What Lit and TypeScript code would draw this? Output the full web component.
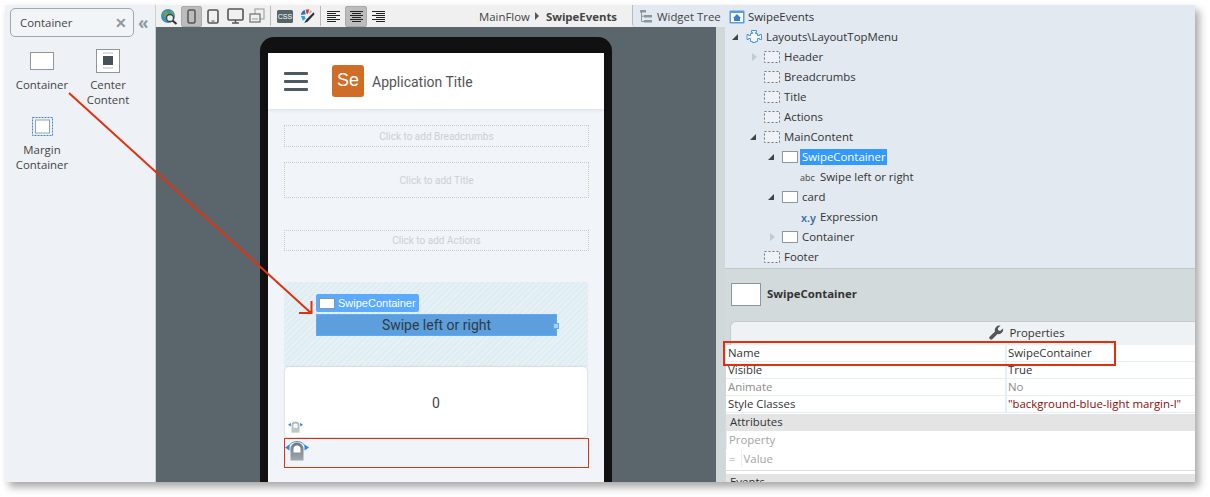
import { LitElement, css, html, svg } from 'lit';
import { customElement } from 'lit/decorators.js';

type TreeRow = { label: string; level: number; arrow?: 'open' | 'closed'; icon: string; selected?: boolean };

const treeRows: TreeRow[] = [
  { label: 'SwipeEvents', level: 0, icon: 'screen' },
  { label: 'Layouts\\LayoutTopMenu', level: 1, arrow: 'open', icon: 'block' },
  { label: 'Header', level: 2, arrow: 'closed', icon: 'dash' },
  { label: 'Breadcrumbs', level: 2, icon: 'dash' },
  { label: 'Title', level: 2, icon: 'dash' },
  { label: 'Actions', level: 2, icon: 'dash' },
  { label: 'MainContent', level: 2, arrow: 'open', icon: 'dash' },
  { label: 'SwipeContainer', level: 3, arrow: 'open', icon: 'box', selected: true },
  { label: 'Swipe left or right', level: 4, icon: 'abc' },
  { label: 'card', level: 3, arrow: 'open', icon: 'box' },
  { label: 'Expression', level: 4, icon: 'xy' },
  { label: 'Container', level: 3, arrow: 'closed', icon: 'box' },
  { label: 'Footer', level: 2, icon: 'dash' },
];

const indent = [4, 7, 25, 43, 61];

const props = [
  { name: 'Name', value: 'SwipeContainer', kind: '' },
  { name: 'Visible', value: 'True', kind: '' },
  { name: 'Animate', value: 'No', kind: 'muted' },
  { name: 'Style Classes', value: '"background-blue-light margin-l"', kind: 'code' },
];

const gestureIcon = (w: number, h: number, faded: boolean) => html`
  <svg width=${w} height=${h} viewBox="0 0 24 21">
    <defs>
      <linearGradient id=${faded ? 'fingerA' : 'fingerB'} x1="0" y1="0" x2="0" y2="1">
        <stop offset="0" stop-color=${faded ? '#aeb9bd' : '#6d787d'} />
        <stop offset="1" stop-color=${faded ? '#c2cccf' : '#a0a9ad'} />
      </linearGradient>
    </defs>
    ${faded ? '' : svg`<path d="M3 8 A9.500 9.500 0 0 1 21 8" fill="none" stroke="#4a9be8" stroke-width="1"/>`}
    <path d="M0 7.500 L4.500 4.500 V10.500Z M24 7.500 L19.500 4.500 V10.500Z" fill="#2f86e0"/>
    <path d="M5.500 20.500 V9 A6.500 6.500 0 0 1 18.500 9 V20.500Z" fill=${faded ? 'url(#fingerA)' : 'url(#fingerB)'}/>
    <path d="M8.500 12.500 V9 A3.500 3.500 0 0 1 15.500 9 V12.500Z" fill="#fff"/>
  </svg>`;

@customElement('app-root')
export class AppRoot extends LitElement {
  static styles = css`
    :host {
      display: block;
      position: relative;
      width: 1210px;
      height: 497px;
      padding: 5px 15px 15px 5px;
      box-sizing: border-box;
      background: #fff;
      font-family: "Open Sans", "Noto Sans", sans-serif;
      font-size: 11.4px;
      color: #333;
      overflow: hidden;
    }
    .window {
      display: flex;
      height: 477px;
      box-shadow: 4px 5px 8px rgba(0, 0, 0, 0.35);
      overflow: hidden;
    }

    /* toolbox */
    .toolbox {
      width: 150px;
      flex: none;
      background: #eef2f6;
      border-right: 1px solid #c9d0d3;
      box-sizing: content-box;
    }
    .search-row {
      display: flex;
      align-items: center;
      padding: 3px 0 0 5px;
    }
    .search {
      width: 124px;
      height: 29px;
      box-sizing: border-box;
      border: 1px solid #9fa9ad;
      border-radius: 5px;
      display: flex;
      align-items: center;
      justify-content: space-between;
      padding: 0 6px 0 9px;
      color: #444;
      background: #f2f5f8;
    }
    .search b { color: #8d979c; font-size: 14px; font-weight: 700; line-height: 1; }
    .collapse { margin-left: 4px; color: #8d9ba1; font-size: 17px; line-height: 1; font-weight: 700; }
    .items {
      display: grid;
      grid-template-columns: 66px 66px;
      padding: 10px 0 0 4px;
      row-gap: 5px;
    }
    .item {
      display: flex;
      flex-direction: column;
      align-items: center;
      text-align: center;
      line-height: 15px;
      color: #444;
    }
    .item .ic { height: 28px; display: flex; align-items: center; justify-content: center; margin-bottom: 2px; }

    /* designer */
    .designer {
      width: 569px;
      flex: none;
      display: flex;
      flex-direction: column;
    }
    .toolbar {
      height: 22px;
      flex: none;
      background: #f0f0f0;
      display: flex;
      align-items: center;
      position: relative;
    }
    .tools { display: flex; align-items: center; padding-left: 4px; height: 22px; }
    .tool { display: flex; align-items: center; justify-content: center; height: 21px; }
    .tool.on { background: #bcbcbc; border: 1px solid #aaa; border-radius: 2px; box-sizing: border-box; }
    .sep { width: 1px; height: 20px; background: #b5bcbf; }
    .crumb {
      margin-left: 94px;
      display: flex;
      align-items: center;
      gap: 5px;
      color: #444;
      white-space: nowrap;
    }
    .crumb i { width: 0; height: 0; border: 4px solid transparent; border-left: 4px solid #555; border-right: 0; }
    .crumb b { font-weight: 700; margin-left: 2px; }
    .tree-tab {
      position: absolute;
      right: 0;
      top: 0;
      width: 93px;
      height: 22px;
      box-sizing: border-box;
      background: #e2e9f0;
      border-left: 1px solid #b4bdc2;
      border-bottom-left-radius: 4px;
      display: flex;
      align-items: center;
      gap: 4px;
      padding-left: 6px;
      color: #444;
    }
    .stage { flex: 1; display: flex; min-height: 0; }
    .canvas {
      flex: 1;
      background: #5a666b;
      padding: 10px 0 0 104px;
      overflow: hidden;
    }
    .strip { width: 9px; flex: none; background: #d0d8da; }
    .phone {
      width: 352px;
      height: 600px;
      box-sizing: border-box;
      background: #111;
      border-radius: 14px 14px 0 0;
      padding: 16px 8px 0;
    }
    .screen {
      height: 100%;
      background: #f1f4f8;
      font-family: Roboto, "Liberation Sans", sans-serif;
      padding-top: 72px;
      position: relative;
    }
    .app-head {
      position: absolute;
      inset: 0 0 auto 0;
      height: 56px;
      background: #fff;
      box-shadow: 0 1px 4px rgba(0, 0, 0, 0.1);
      display: flex;
      align-items: center;
    }
    .burger { margin-left: 16px; width: 24px; display: flex; flex-direction: column; gap: 5px; }
    .burger span { height: 3px; background: #4e5a62; border-radius: 1px; }
    .logo {
      margin-left: 24px;
      width: 32px;
      height: 32px;
      border-radius: 3px;
      background: #cf6d26;
      color: #fff;
      font-family: "Liberation Sans", sans-serif;
      font-size: 18px;
      display: flex;
      align-items: center;
      justify-content: center;
      padding-bottom: 2px;
      box-sizing: border-box;
    }
    .app-title { margin-left: 8px; padding-top: 2px; font-size: 14px; color: #555; }
    .ph {
      margin: 0 15px 0 16px;
      border: 1px dotted #c6cbcf;
      color: #ccd0d4;
      font-size: 10px;
      display: flex;
      align-items: center;
      justify-content: center;
      box-sizing: border-box;
    }
    .ph.crumbs { height: 22px; margin-bottom: 15px; }
    .ph.title { height: 36px; margin-bottom: 32px; }
    .ph.actions { height: 21px; margin-bottom: 31px; }
    .swipe {
      margin: 0 16px;
      height: 85px;
      box-sizing: border-box;
      padding: 12px 0 0 32px;
      background: repeating-linear-gradient(135deg, #dfedf3 0 2px, #e6f1f6 2px 4px);
    }
    .tag {
      width: 103px;
      height: 18px;
      box-sizing: border-box;
      background: #5aabff;
      border-radius: 2px;
      display: flex;
      align-items: center;
      gap: 3px;
      padding-left: 3px;
      color: #fff;
      font-family: "Liberation Sans", sans-serif;
      font-size: 11px;
      white-space: nowrap;
    }
    .tag span { width: 16px; height: 11px; box-sizing: border-box; background: #fff; border: 1px solid #8c979c; display: block; }
    .swipe-text {
      margin-top: 2px;
      width: 241px;
      height: 22px;
      box-sizing: border-box;
      background: #5c9fdc;
      border: 1px solid #5aabff;
      color: #2f3b47;
      font-size: 14px;
      display: flex;
      align-items: center;
      justify-content: center;
      position: relative;
    }
    .swipe-text i {
      position: absolute;
      right: -3px;
      top: 8px;
      width: 4px;
      height: 4px;
      background: #a9d4f5;
      border: 1px solid #5aabff;
    }
    .card {
      margin: 0 17px;
      height: 70px;
      background: #fff;
      border-radius: 4px;
      box-shadow: 0 0 2px rgba(0, 0, 0, 0.25);
      display: flex;
      align-items: center;
      justify-content: center;
      padding-top: 2px;
      box-sizing: border-box;
      font-size: 14px;
      color: #444;
      position: relative;
    }
    .card svg { position: absolute; left: 3px; bottom: 4px; }
    .target {
      margin: 1px 15px 0 16px;
      height: 30px;
      box-sizing: border-box;
      border: 1px solid #d9321a;
      padding-left: 0;
    }
    .target svg { display: block; margin-top: 1px; }

    /* right side */
    .side {
      flex: 1;
      min-width: 0;
      display: flex;
      flex-direction: column;
      background: #d2dadb;
    }
    .tree {
      height: 264px;
      flex: none;
      box-sizing: border-box;
      padding-top: 2px;
      background: #e2e9f0;
      border-bottom: 1px solid #bfc8cb;
      color: #333;
    }
    .row { height: 20px; display: flex; align-items: center; white-space: nowrap; }
    .slot { width: 14px; flex: none; display: flex; align-items: center; }
    .row .ic { width: 16px; flex: none; display: flex; align-items: center; margin-right: 4px; }
    .row.root .ic { margin-right: 3px; }
    .row .lbl { padding-bottom: 2px; }
    .row .sel { background: #3399ff; color: #fff; margin-left: -2px; padding: 0 1px 1px 2px; line-height: 15px; }
    .open { width: 0; height: 0; border-style: solid; border-width: 0 0 6px 6px; border-color: transparent transparent #444 transparent; }
    .closed { width: 0; height: 0; border: 4px solid transparent; border-left: 5px solid #c3cbce; border-right: 0; margin-left: 2px; }
    .abc { font-size: 9px; color: #444; letter-spacing: 0; }
    .xy { font-size: 11px; font-weight: 600; color: #2f6ba8; line-height: 1; margin-left: 1px; }
    .detail {
      height: 52px;
      flex: none;
      display: flex;
      align-items: center;
      gap: 6px;
      padding: 0 0 1px 6px;
      box-sizing: border-box;
      font-weight: 700;
      color: #333;
    }
    .detail span.box { width: 30px; height: 23px; box-sizing: border-box; background: #fff; border: 1px solid #8c979c; }
    .detail span.txt { padding-bottom: 3px; }
    .tab {
      height: 24px;
      flex: none;
      margin-left: 5px;
      box-sizing: border-box;
      background: #eef2f5;
      border-top: 1px solid #c4ccd0;
      border-left: 1px solid #c4ccd0;
      border-top-left-radius: 6px;
      display: flex;
      align-items: center;
      justify-content: center;
      gap: 5px;
      padding: 0 0 2px 128px;
      color: #333;
    }
    .sheet { flex: 1; margin-left: 1px; background: #fff; min-height: 0; }
    .prop {
      display: grid;
      grid-template-columns: 279px 1fr;
      height: 17px;
      line-height: 15px;
      border-bottom: 1px solid #e3eef5;
      box-sizing: border-box;
      white-space: nowrap;
    }
    .prop > div { padding-left: 2px; }
    .prop > div + div { border-left: 2px solid #e3eef5; padding-left: 1px; }
    .muted { color: #8b8b8b; }
    .code { color: #8c0a0a; }
    .bar { height: 17px; line-height: 15px; background: #e4e4e4; padding-left: 4px; color: #333; }
    .bar.first { margin-top: 1px; }
    .attr { height: 18px; line-height: 18px; padding-left: 2px; color: #a3a3a3; border-left: 1px solid #e3eef5; }
    .attr.val { border-left: 0; padding-left: 3px; display: flex; gap: 5px; line-height: 20px; }
    .attr.val span { border-left: 1px solid #e3eef5; padding-left: 2px; height: 18px; }
    .rule { height: 3px; border-bottom: 1px solid #ddd; margin-bottom: 3px; }

    /* annotations laid over the window */
    .marks { position: absolute; left: 0; top: 0; pointer-events: none; }
  `;

  private treeIcon(kind: string) {
    switch (kind) {
      case 'screen':
        return html`<svg width="16" height="14" viewBox="0 0 16 14"><rect x=".5" y=".5" width="15" height="13" fill="#5b9be0" rx="1"/><rect x="2" y="3" width="12" height="9" fill="#fff"/><path d="M8 4 L12 8 H11 V11 H5 V8 H4Z" fill="#3d7fcc"/></svg>`;
      case 'block':
        return html`<svg width="16" height="16" viewBox="0 0 16 16"><path d="M5.500 1.500h5v2h-1v1h2v2h2v-1h2v5h-2v-1h-2v3h-2v1h-3v-1h-2v-3h-2v1h-1.500v-5h1.500v1h2v-2h2v-1h-1z" fill="#f4f8fc" stroke="#4f94dc"/></svg>`;
      case 'dash':
        return html`<svg width="16" height="12" viewBox="0 0 16 12"><rect x=".5" y=".5" width="15" height="11" fill="#eef2f6" stroke="#777" stroke-dasharray="2 2"/></svg>`;
      case 'box':
        return html`<svg width="16" height="12" viewBox="0 0 16 12"><rect x=".5" y=".5" width="15" height="11" fill="#fff" stroke="#8c979c"/></svg>`;
      case 'abc':
        return html`<span class="abc">abc</span>`;
      case 'xy':
        return html`<span class="xy">x.y</span>`;
    }
    return '';
  }

  private renderRow(r: TreeRow) {
    if (r.level === 0) {
      return html`<div class="row root" style="padding-left:${indent[0]}px"><span class="ic">${this.treeIcon(r.icon)}</span><span class="lbl">${r.label}</span></div>`;
    }
    return html`
      <div class="row" style="padding-left:${indent[r.level]}px">
        <span class="slot">${r.arrow ? html`<span class=${r.arrow}></span>` : ''}</span>
        <span class="ic">${this.treeIcon(r.icon)}</span>
        <span class=${r.selected ? 'sel' : 'lbl'}>${r.label}</span>
      </div>`;
  }

  private renderTools() {
    return html`
      <div class="tools">
        <span class="tool" style="width:18px">
          <svg width="18" height="17" viewBox="0 0 18 17"><circle cx="8" cy="8" r="7" fill="#3f8fb5"/><path d="M3 4 Q7 2 9 5 Q6 7 7 10 Q4 10 3 4Z M10 2 Q14 4 14 8 L11 6Z" fill="#6fa352"/><circle cx="10" cy="10" r="3.500" fill="#e8eef2" stroke="#444" stroke-width="1.300"/><path d="M12.500 12.500 L16.500 16" stroke="#333" stroke-width="2"/></svg>
        </span>
        <span class="tool on" style="width:21px;margin-left:3px">
          <svg width="10" height="15" viewBox="0 0 10 15"><rect x="1" y="1" width="7" height="13" rx="1.500" fill="none" stroke="#555" stroke-width="1.500"/></svg>
        </span>
        <span class="tool" style="width:12px;margin-left:5px">
          <svg width="12" height="15" viewBox="0 0 12 15"><rect x="1" y="1" width="10" height="13" rx="1.500" fill="none" stroke="#555" stroke-width="1.600"/><path d="M4.500 12h3" stroke="#555"/></svg>
        </span>
        <span class="tool" style="width:17px;margin-left:8px">
          <svg width="17" height="16" viewBox="0 0 17 16"><rect x="1" y="1" width="15" height="11" rx="1" fill="none" stroke="#555" stroke-width="1.600"/><path d="M8.500 12v3M5 15h7" stroke="#555" stroke-width="1.500"/></svg>
        </span>
        <span class="tool" style="width:16px;margin-left:5px">
          <svg width="16" height="16" viewBox="0 0 16 16"><rect x="6" y="1" width="9" height="10" fill="none" stroke="#a5a5a5" stroke-width="1.200"/><rect x="1" y="6" width="10" height="8" fill="#f0f0f0" stroke="#777" stroke-width="1.300"/><path d="M3 11h6" stroke="#999"/></svg>
        </span>
        <span class="sep" style="margin-left:5px"></span>
        <span class="tool" style="width:16px;margin-left:6px">
          <svg width="16" height="13" viewBox="0 0 16 13"><rect width="16" height="13" rx="1.500" fill="#56646a"/><text x="8" y="9" font-size="7" fill="#fff" text-anchor="middle" font-family="Liberation Sans">CSS</text></svg>
        </span>
        <span class="tool" style="width:15px;margin-left:7px">
          <svg width="16" height="16" viewBox="0 0 16 16"><path d="M1 7 A6 6 0 0 1 5 1.500 L6 6Z" fill="#2b6fd0"/><path d="M6 1 H10 L8.500 5.500 H7Z" fill="#d03a3a"/><path d="M11 1.500 L13 3.500 L9.500 6Z" fill="#e0a0a0"/><path d="M1 8 H5 L6 11 L3 13Z" fill="#27a7e0"/><path d="M14.500 4 L6.500 12 L4.500 15.500 L8 14 L15.500 6Z" fill="#2a2f33"/></svg>
        </span>
        <span class="sep" style="margin-left:5px"></span>
        ${[0, 1, 2].map((a) => this.alignIcon(a))}
      </div>`;
  }

  private alignIcon(a: number) {
    const lines = [13, 9, 13, 9, 13, 9];
    const bars = lines.map((w, i) => {
      const x = a === 0 ? 0 : a === 1 ? (13 - w) / 2 : 13 - w;
      return svg`<rect x=${x} y=${i * 2 + 1} width=${w} height="1" fill="#222"/>`;
    });
    const cls = a === 1 ? 'tool on' : 'tool';
    const st = a === 0 ? 'width:13px;margin-left:6px' : a === 1 ? 'width:22px;margin-left:5px' : 'width:13px;margin-left:5px';
    return html`<span class=${cls} style=${st}><svg width="13" height="13" viewBox="0 0 13 13">${bars}</svg></span>`;
  }

  render() {
    return html`
      <div class="window">
        <aside class="toolbox">
          <div class="search-row">
            <div class="search"><span>Container</span><b>✕</b></div>
            <span class="collapse">«</span>
          </div>
          <div class="items">
            <div class="item">
              <span class="ic"><svg width="24" height="18" viewBox="0 0 24 18"><rect x=".5" y=".5" width="23" height="17" fill="#fff" stroke="#8c979c"/></svg></span>
              Container
            </div>
            <div class="item">
              <span class="ic"><svg width="24" height="24" viewBox="0 0 24 24"><rect x=".5" y=".5" width="23" height="23" fill="#fff" stroke="#8c979c"/><path d="M7 4h10M7 19h10" stroke="#bbb"/><rect x="7" y="7" width="10" height="9" fill="#46525a"/></svg></span>
              Center<br />Content
            </div>
            <div class="item">
              <span class="ic"><svg width="21" height="19" viewBox="0 0 21 19"><rect x=".5" y=".5" width="20" height="18" fill="none" stroke="#3a86dd" stroke-dasharray="2 1"/><rect x="3.500" y="3" width="14" height="13" fill="#fff" stroke="#98a2a6"/></svg></span>
              Margin<br />Container
            </div>
          </div>
        </aside>

        <section class="designer">
          <div class="toolbar">
            ${this.renderTools()}
            <div class="crumb"><span>MainFlow</span><i></i><b>SwipeEvents</b></div>
            <div class="tree-tab">
              <svg width="14" height="14" viewBox="0 0 14 14"><path d="M1 1h6v2.500H1zM5 6h8v2.500H5zM5 11h8v2.500H5z" fill="#8a979d"/><path d="M2.500 3v9.500H5M2.500 7.200H5" stroke="#8a979d" fill="none"/></svg>
              Widget Tree
            </div>
          </div>
          <div class="stage">
            <div class="canvas">
              <div class="phone">
                <div class="screen">
                  <div class="app-head">
                    <div class="burger"><span></span><span></span><span></span></div>
                    <div class="logo">Se</div>
                    <div class="app-title">Application Title</div>
                  </div>
                  <div class="ph crumbs">Click to add Breadcrumbs</div>
                  <div class="ph title">Click to add Title</div>
                  <div class="ph actions">Click to add Actions</div>
                  <div class="swipe">
                    <div class="tag"><span></span>SwipeContainer</div>
                    <div class="swipe-text">Swipe left or right<i></i></div>
                  </div>
                  <div class="card">0${gestureIcon(15, 13, true)}</div>
                  <div class="target">${gestureIcon(24, 21, false)}</div>
                </div>
              </div>
            </div>
            <div class="strip"></div>
          </div>
        </section>

        <section class="side">
          <div class="tree">${treeRows.map((r) => this.renderRow(r))}</div>
          <div class="detail"><span class="box"></span><span class="txt">SwipeContainer</span></div>
          <div class="tab">
            <svg width="15" height="15" viewBox="0 0 15 15"><path d="M14 3.500 L11 6 L9 5 L9 3 L11.500 .8 A4.500 4.500 0 0 0 6 6.500 L.8 11.500 A1.800 1.800 0 0 0 3.500 14 L8.500 9 A4.500 4.500 0 0 0 14 3.500Z" fill="#555"/></svg>
            Properties
          </div>
          <div class="sheet">
            ${props.map(
              (p) => html`
                <div class="prop">
                  <div class=${p.kind === 'muted' ? 'muted' : ''}>${p.name}</div>
                  <div class=${p.kind}>${p.value}</div>
                </div>`,
            )}
            <div class="bar first">Attributes</div>
            <div class="attr">Property</div>
            <div class="attr val">=<span>Value</span></div>
            <div class="rule"></div>
            <div class="bar">Events</div>
          </div>
        </section>
      </div>

      <svg class="marks" width="1210" height="497" viewBox="0 0 1210 497">
        <path d="M69 93 L311 313 M299 313 H311.500 V301" fill="none" stroke="#dd3311" stroke-width="2"/>
        <rect x="724" y="342" width="391" height="23" fill="none" stroke="#e0300f" stroke-width="2"/>
      </svg>
    `;
  }
}
